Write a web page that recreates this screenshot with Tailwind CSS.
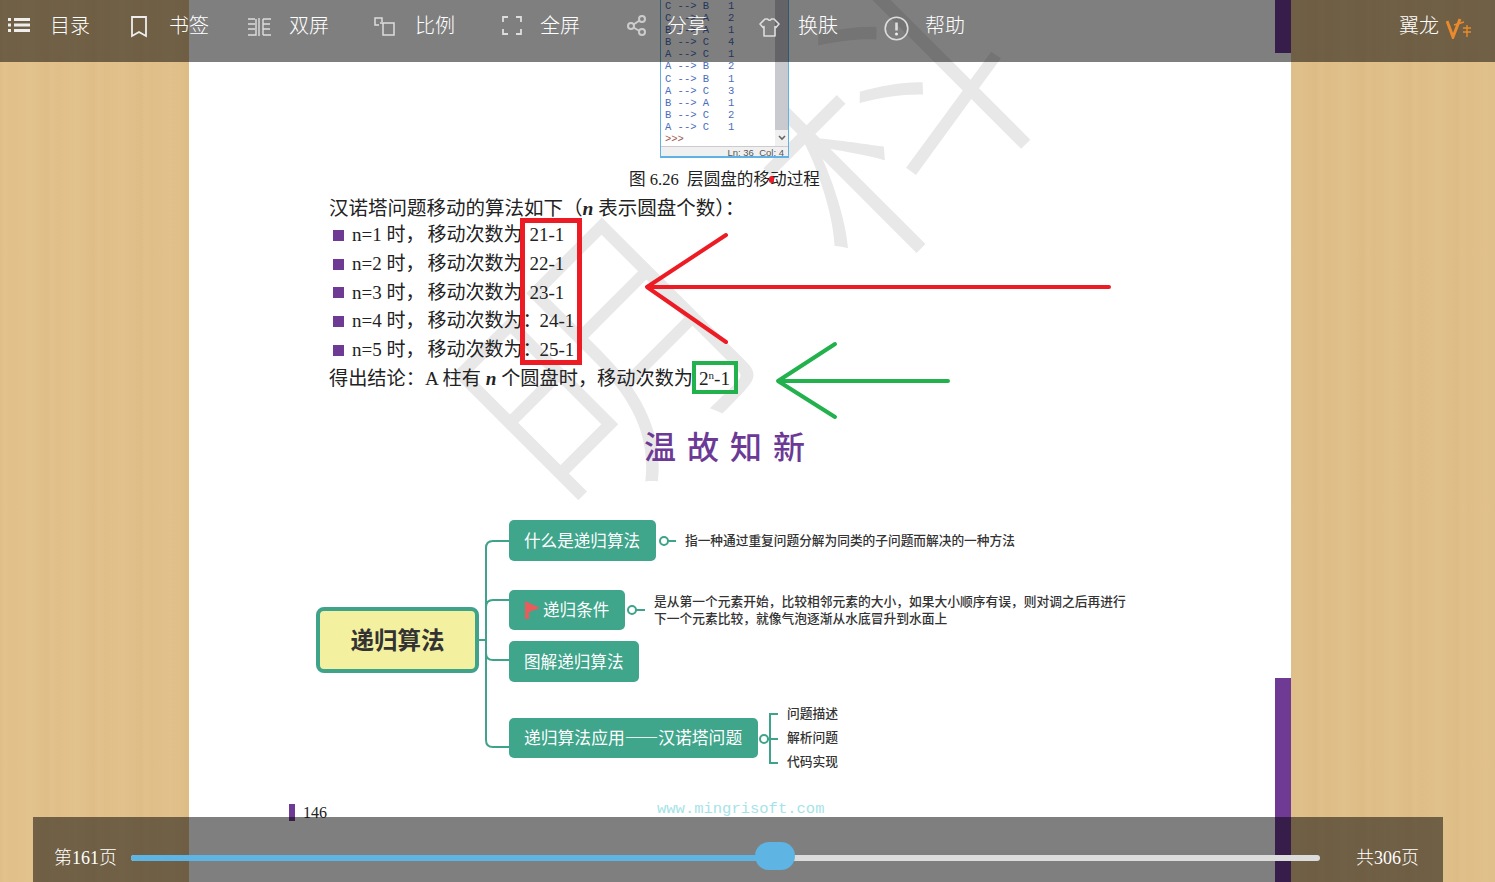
<!DOCTYPE html>
<html lang="zh"><head><meta charset="utf-8"><title>Reader</title>
<script src="https://cdn.jsdelivr.net/npm/@tailwindcss/browser@4"></script></head>
<body class="m-0 overflow-hidden">
<div class="relative w-[1495px] h-[882px] overflow-hidden font-['Liberation_Serif','Noto_Sans_CJK_SC',serif] bg-[#dfbe88] bg-[repeating-linear-gradient(90deg,rgba(150,105,50,0.035)_0px,rgba(255,240,200,0.03)_5px,rgba(150,105,50,0.015)_11px,rgba(255,240,200,0.04)_29px,rgba(150,105,50,0.03)_47px),linear-gradient(90deg,#e2c18b,#dcbb85_40%,#e0bf89)]">

  <!-- page -->
  <main class="relative ml-[189px] w-[1102px] h-[882px] bg-white overflow-hidden text-[#222]">
    <!-- watermark -->
    <div aria-hidden="true" class="absolute left-[271px] top-[230px] text-[260px] leading-none text-[#e8e8e8] font-['Noto_Sans_CJK_SC',sans-serif] font-light -rotate-45">明</div>
    <div aria-hidden="true" class="absolute left-[548px] top-[-30px] text-[270px] leading-none text-[#e8e8e8] font-['Noto_Sans_CJK_SC',sans-serif] font-light -rotate-45">科</div>
    <!-- purple page edge -->
    <div class="absolute right-0 top-0 w-4 h-[53px] bg-[#6e3a94]"></div>
    <div class="absolute right-0 top-[678px] w-4 h-[204px] bg-[#6e3a94]"></div>

    <div class="relative">
      <!-- console figure -->
      <div class="relative ml-[471px] w-[129px] h-[158px] border-x border-b-2 border-[#5fb2e3] bg-white font-['Liberation_Mono',monospace] text-[10.5px] leading-[12.1px] text-[#4a6cbc] overflow-hidden">
        <pre class="pl-1 pt-0 font-['Liberation_Mono',monospace]">C --&gt; B   1
C --&gt; A   2
B --&gt; A   1
B --&gt; C   4
A --&gt; C   1
A --&gt; B   2
C --&gt; B   1
A --&gt; C   3
B --&gt; A   1
B --&gt; C   2
A --&gt; C   1
<span class="text-[#a0584e]">&gt;&gt;&gt;</span></pre>
        <div class="absolute right-0 top-0 w-[13px] h-[146px] bg-[#f0f0f0]"><div class="h-[130px] bg-[#c9c9d0]"></div>
          <svg class="mx-auto mt-[5px]" width="8" height="6" viewBox="0 0 8 6"><path d="M1 1l3 3 3-3" fill="none" stroke="#666" stroke-width="1.6"/></svg></div>
        <div class="absolute left-0 right-0 bottom-0 h-[10px] bg-[#f0f0f0] border-t border-[#ccc] text-[#555] font-['Liberation_Sans',sans-serif] text-[9.5px] leading-[12px] text-right pr-[4px]">Ln: 36&nbsp;&nbsp;Col: 4</div>
      </div>

      <p class="relative mt-[10px] ml-[440px] h-6 text-[16.6px] leading-6">图 6.26&nbsp;&nbsp;层圆盘的移动过程<span class="absolute left-[140px] top-[8px] w-[5px] h-[7px] rounded-full bg-[#ee1c25]"></span></p>

      <div class="ml-[140px] mt-[5px] text-[19.5px]">
        <p class="h-[24px] leading-[24px] whitespace-nowrap">汉诺塔问题移动的算法如下（<i class="font-bold">n</i> 表示圆盘个数）：</p>
        <ul class="ml-[4px] text-[19px]">
          <li class="flex items-center h-[28.75px] whitespace-nowrap"><span class="w-[11px] h-[11px] bg-[#6e3a94] mr-[8px]"></span>n=1 时，<span class="ml-[3px] w-[102px]">移动次数为</span>21-1</li>
          <li class="flex items-center h-[28.75px] whitespace-nowrap"><span class="w-[11px] h-[11px] bg-[#6e3a94] mr-[8px]"></span>n=2 时，<span class="ml-[3px] w-[102px]">移动次数为</span>22-1</li>
          <li class="flex items-center h-[28.75px] whitespace-nowrap"><span class="w-[11px] h-[11px] bg-[#6e3a94] mr-[8px]"></span>n=3 时，<span class="ml-[3px] w-[102px]">移动次数为</span>23-1</li>
          <li class="flex items-center h-[28.75px] whitespace-nowrap"><span class="w-[11px] h-[11px] bg-[#6e3a94] mr-[8px]"></span>n=4 时，<span class="ml-[3px] w-[112px]">移动次数为：</span>24-1</li>
          <li class="flex items-center h-[28.75px] whitespace-nowrap"><span class="w-[11px] h-[11px] bg-[#6e3a94] mr-[8px]"></span>n=5 时，<span class="ml-[3px] w-[112px]">移动次数为：</span>25-1</li>
        </ul>
        <p class="flex h-[28px] leading-[28px] whitespace-nowrap text-[19.2px]"><span class="w-[370px] whitespace-pre">得出结论：A 柱有 <i class="font-bold">n</i> 个圆盘时，移动次数为</span><span>2<sup class="text-[11px]">n</sup>-1</span></p>
      </div>

      <h2 class="mt-[34px] ml-[455px] h-9 text-[32px] leading-9 tracking-[11px] font-medium text-[#6c3a96] font-['Noto_Sans_CJK_SC',sans-serif]">温故知新</h2>

      <!-- mind map: free diagram canvas -->
      <div class="relative mt-[47px] h-[270px] font-['Noto_Sans_CJK_SC',sans-serif]">
        <svg class="absolute left-0 top-0" width="1000" height="270" viewBox="0 0 1000 270" fill="none" stroke="#3fa28a" stroke-width="2">
          <path d="M290 130h7M320 31h-16q-7 0-7 7v192q0 7 7 7h16M320 90h-16q-7 0-7 7v46q0 7 7 7h16"/>
          <circle cx="475" cy="31" r="4" fill="#fff"/><path d="M479 31h8"/>
          <circle cx="443" cy="100" r="4" fill="#fff"/><path d="M447 100h9"/>
          <circle cx="575" cy="229" r="4" fill="#fff"/>
          <path d="M589 204h-8v49h8M579 229h10"/>
        </svg>
        <div class="absolute left-[127px] top-[97px] w-[163px] h-[66px] flex items-center justify-center rounded-lg border-4 border-[#3fa28a] bg-[#f3f1a0] text-[23.5px] font-bold text-[#333]">递归算法</div>
        <div class="absolute left-[320px] top-[10px] w-[147px] h-[41px] flex items-center pl-[15px] rounded-[5px] bg-[#3fa58b] text-white text-[16.6px] whitespace-nowrap">什么是递归算法</div>
        <div class="absolute left-[320px] top-[80px] w-[116px] h-[40px] flex items-center pl-[16px] rounded-[5px] bg-[#3fa58b] text-white text-[16.6px] whitespace-nowrap">
          <svg class="mr-[3px]" width="15" height="18" viewBox="0 0 15 18"><path d="M0 0l15 7-11 4v7H0z" fill="#e85c5c"/></svg>递归条件</div>
        <div class="absolute left-[320px] top-[131px] w-[130px] h-[41px] flex items-center pl-[15px] rounded-[5px] bg-[#3fa58b] text-white text-[16.6px] whitespace-nowrap">图解递归算法</div>
        <div class="absolute left-[320px] top-[208px] w-[249px] h-[40px] flex items-center pl-[15px] rounded-[5px] bg-[#3fa58b] text-white text-[16.8px] whitespace-nowrap">递归算法应用——汉诺塔问题</div>
        <p class="absolute left-[496px] top-[20px] text-[12.7px] leading-[20px] font-medium text-[#333] whitespace-nowrap">指一种通过重复问题分解为同类的子问题而解决的一种方法</p>
        <p class="absolute left-[465px] top-[82px] text-[12.75px] leading-[17px] font-medium text-[#333] whitespace-nowrap">是从第一个元素开始，比较相邻元素的大小，如果大小顺序有误，则对调之后再进行<br>下一个元素比较，就像气泡逐渐从水底冒升到水面上</p>
        <div class="absolute left-[598px] top-[191px] flex flex-col text-[12.75px] leading-[24px] font-medium text-[#333] whitespace-nowrap"><span>问题描述</span><span>解析问题</span><span>代码实现</span></div>
      </div>

      <!-- page footer -->
      <div class="relative mt-[24px] h-[30px]">
        <span class="absolute left-[100px] top-0 w-[6px] h-[17px] bg-[#6e3a94]"></span>
        <span class="absolute left-[114px] top-0 text-[16px] leading-[18px]">146</span>
        <span class="absolute left-[468px] top-[-4px] font-['Liberation_Mono',monospace] text-[15.5px] leading-[18px] text-[#a6e3e8]">www.mingrisoft.com</span>
      </div>
    </div>

    <!-- annotations drawn on the page -->
    <div class="absolute left-[331px] top-[218px] w-[62px] h-[147px] border-[5px] border-[#ed1c24]"></div>
    <div class="absolute left-[503px] top-[361px] w-[46px] h-[33px] border-4 border-[#22b14c]"></div>
    <svg class="absolute left-0 top-0" width="1102" height="882" viewBox="0 0 1102 882" fill="none" stroke-width="4" stroke-linecap="round" stroke-linejoin="round">
      <path d="M920 287H459M537 235l-79 52 79 55" stroke="#ed1c24"/>
      <path d="M759 381H590M646 344l-57 37 57 36" stroke="#22b14c"/>
    </svg>
  </main>

  <!-- top toolbar -->
  <header class="absolute left-0 top-0 w-full h-[62px] bg-black/50 flex items-center text-white text-[20px] font-light font-['Noto_Sans_CJK_SC',sans-serif] pb-[12px]">
    <a class="flex items-center ml-[8px] w-[122px]">
      <svg class="mr-[20px]" width="22" height="16" viewBox="0 0 22 16" fill="#eee"><path d="M0 1h3v3H0zM0 6.500h3v3H0zM0 12h3v3H0zM6 1h16v3H6zM6 6.500h16v3H6zM6 12h16v3H6z"/></svg>目录</a>
    <a class="flex items-center w-[117px]">
      <svg class="mr-[21px] mt-[4px]" width="18" height="24" viewBox="0 0 18 24" fill="none" stroke="#eee" stroke-width="1.800"><path d="M2 2h14v19l-7-4-7 4z"/></svg>书签</a>
    <a class="flex items-center w-[127px]">
      <svg class="mr-[17px] mt-[3px]" width="25" height="20" viewBox="0 0 25 20" fill="none" stroke="#ddd" stroke-width="1.400"><path d="M1 2h7M1 7h7M1 12h7M1 18h8V2M12 1v18M16 2h8M16 7h7M16 12h7M16 18h8M16 2v16"/></svg>双屏</a>
    <a class="flex items-center w-[128px]">
      <svg class="mr-[20px] mt-[3px]" width="21" height="19" viewBox="0 0 21 19" fill="none" stroke="#ddd" stroke-width="1.500"><path d="M8 5V1H1v7h4"/><path d="M6 6h14v12H9V6"/></svg>比例</a>
    <a class="flex items-center w-[125px]">
      <svg class="mr-[18px]" width="20" height="19" viewBox="0 0 20 19" fill="none" stroke="#ddd" stroke-width="1.800"><path d="M6 1H1v5M14 1h5v5M1 13v5h5M19 13v5h-5"/></svg>全屏</a>
    <a class="flex items-center w-[132px]">
      <svg class="mr-[20px]" width="20" height="21" viewBox="0 0 20 21" fill="none" stroke="#ccc" stroke-width="2"><circle cx="4" cy="11" r="3"/><circle cx="15" cy="4" r="3"/><circle cx="15" cy="17" r="3"/><path d="M6.500 9.500l6-4M6.500 12.500l6 3.500"/></svg>分享</a>
    <a class="flex items-center w-[125px]">
      <svg class="mr-[18px] mt-[4px]" width="21" height="20" viewBox="0 0 21 20" fill="none" stroke="#ddd" stroke-width="1.600"><path d="M6 2h2.500q2 2.500 4 0H15l5 5-3 3.500-1-1V19H5V9.500l-1 1L1 7z" stroke-linejoin="round"/></svg>换肤</a>
    <a class="flex items-center">
      <svg class="mr-[16px] mt-[7px]" width="25" height="25" viewBox="0 0 25 25" fill="none" stroke="#ddd" stroke-width="1.600"><circle cx="12.500" cy="12.500" r="11.300"/><path d="M12.500 6.500v8" stroke-width="2.600"/><circle cx="12.500" cy="18" r="1.500" fill="#eee" stroke="none"/></svg>帮助</a>
    <div class="ml-auto mr-[23px] flex items-center">翼龙
      <svg class="ml-[7px] mt-[6px]" width="26" height="22" viewBox="0 0 26 22" fill="none" stroke="#ea8a2c"><path d="M1 4l6 16L14 2" stroke-width="3"/><path d="M8 8l10-3" stroke-width="1.400"/><path d="M17 11h8M17 15h8M21 8v12" stroke-width="1.400"/></svg>
    </div>
  </header>

  <!-- bottom progress bar -->
  <footer class="absolute left-[33px] top-[817px] w-[1410px] h-[65px] bg-black/50 flex items-center pt-[17px] text-white text-[18px] font-light">
    <span class="ml-[21px] w-[77px] whitespace-nowrap">第161页</span>
    <div class="relative w-[1189px] h-[6px] rounded-full bg-[#dcdcdc]">
      <div class="w-[639px] h-full rounded-l-full bg-[#5eb4e3]"></div>
      <div class="absolute left-[624px] top-[-13px] w-10 h-7 rounded-full bg-[#5eb4e3]"></div>
    </div>
    <span class="ml-[36px] whitespace-nowrap">共306页</span>
  </footer>
</div>
</body></html>
